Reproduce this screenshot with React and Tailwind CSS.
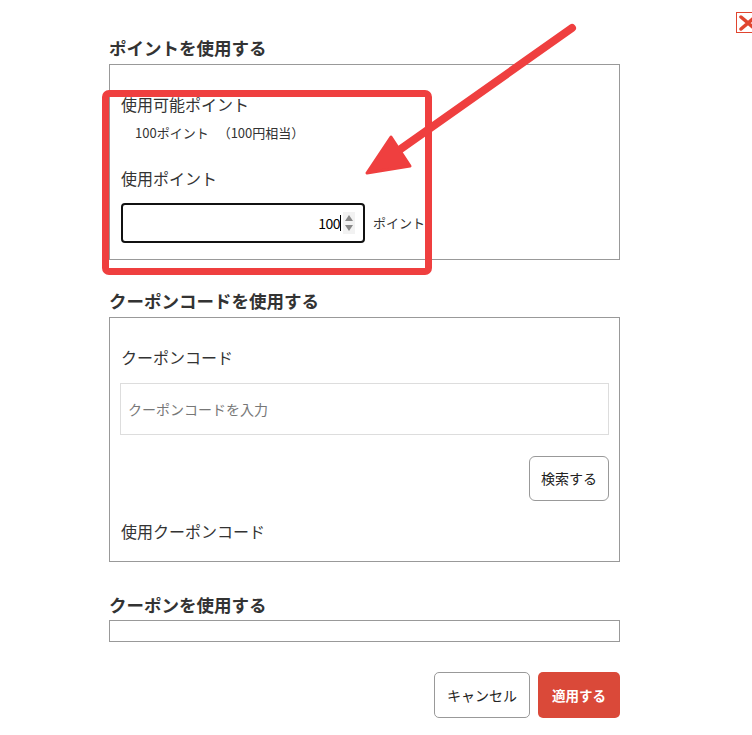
import React from 'react';

const FONT = { fontFamily: '"Noto Sans CJK JP", "Noto Sans", sans-serif' };

const SectionTitle = ({ children, className = '' }) => (
  <h2 className={`h-6 text-[17.5px] leading-6 font-bold text-[#333] ${className}`}>{children}</h2>
);

const Spinner = () => (
  <div className="flex flex-col items-center justify-center w-[12px] h-[22px] bg-[#f2f2f2] ml-[2px]">
    <svg width="10" height="8" viewBox="0 0 10 8"><path d="M5 1 L9 7 L1 7 Z" fill="#888" /></svg>
    <svg width="10" height="8" viewBox="0 0 10 8" className="mt-[2px]"><path d="M1 1 L9 1 L5 7 Z" fill="#888" /></svg>
  </div>
);

export default function App() {
  return (
    <div className="relative w-[752px] h-[735px] overflow-hidden bg-white" style={FONT}>
      <div className="ml-[109px] w-[511px] pt-[36px] flex flex-col">
        {/* points */}
        <SectionTitle className="mb-1">ポイントを使用する</SectionTitle>
        <div className="border border-[#999] px-[11px] pt-[27px] pb-[16px]">
          <div className="text-[16px] leading-6 text-[#333]">使用可能ポイント</div>
          <div className="mt-[7px] pl-[14px] text-[13px] leading-5 text-[#333]">
            100ポイント<span className="ml-[9px]">（100円相当）</span>
          </div>
          <div className="mt-[23px] text-[16px] leading-6 text-[#333]">使用ポイント</div>
          <div className="mt-[13px] flex items-center gap-[8px]">
            <div className="w-[244px] h-[40px] border-2 border-[#111] rounded-[4px] flex items-center justify-end pr-[8px]">
              <span className="text-[14px] text-black tracking-[-0.5px]">100</span>
              <span className="w-px h-[16px] bg-black"></span>
              <Spinner />
            </div>
            <span className="text-[13px] text-[#333]">ポイント</span>
          </div>
        </div>

        {/* coupon code */}
        <SectionTitle className="mt-[29px] mb-1">クーポンコードを使用する</SectionTitle>
        <div className="border border-[#999] pl-[10px] pr-[10px] pt-[27px] pb-[18px] flex flex-col">
          <div className="pl-[1px] text-[16px] leading-6 text-[#333]">クーポンコード</div>
          <div className="mt-[14px] h-[52px] border border-[#ddd] flex items-center px-[7px] text-[14px] text-[#777]">
            クーポンコードを入力
          </div>
          <div className="mt-[21px] flex justify-end">
            <button className="w-[80px] h-[45px] border border-[#999] rounded-[6px] bg-white text-[14px] text-[#222]">
              検索する
            </button>
          </div>
          <div className="mt-[18px] pl-[1px] text-[16px] leading-6 text-[#333]">使用クーポンコード</div>
        </div>

        {/* coupon */}
        <SectionTitle className="mt-[31px] mb-[3px]">クーポンを使用する</SectionTitle>
        <div className="border border-[#999] h-[22px]"></div>

        <div className="mt-[30px] flex justify-end gap-[8px]">
          <button className="w-[96px] h-[46px] border border-[#999] rounded-[5px] bg-white text-[14px] text-[#222]">
            キャンセル
          </button>
          <button className="w-[82px] h-[46px] rounded-[5px] bg-[#da4939] text-[13.5px] font-bold text-white">
            適用する
          </button>
        </div>
      </div>

      {/* close */}
      <div className="absolute left-[736px] top-[12px] w-[22px] h-[21px] border border-[#e0452f] flex items-center pl-[2px]">
        <svg width="18" height="16" viewBox="0 0 18 16">
          <path d="M2 2 L16 14 M16 2 L2 14" stroke="#e0452f" strokeWidth="3.5" strokeLinecap="round" />
        </svg>
      </div>

      {/* annotation */}
      <div className="absolute left-[102px] top-[90px] w-[330px] h-[185px] border-[7px] border-[#ef3f3f] rounded-[7px] pointer-events-none"></div>
      <svg className="absolute left-0 top-0 pointer-events-none" width="752" height="735">
        <line x1="572" y1="28" x2="395" y2="153" stroke="#ef3f3f" strokeWidth="8" strokeLinecap="round" />
        <path d="M367 173 L391 137 L410 166 Z" fill="#ef3f3f" stroke="#ef3f3f" strokeWidth="3" strokeLinejoin="round" />
      </svg>
    </div>
  );
}
